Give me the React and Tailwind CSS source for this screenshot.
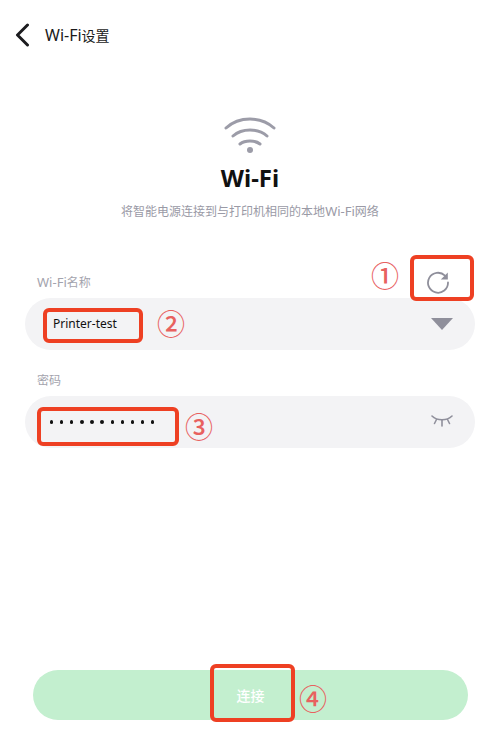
import React from 'react';

const fontStack = "font-['Noto_Sans','Noto_Sans_CJK_SC',sans-serif]";

function WifiIcon() {
  return (
    <svg width="52" height="38" viewBox="0 0 52 38" fill="none" stroke="#9c9ca8" strokeWidth="3" strokeLinecap="round">
      <path d="M2 12 C15 0 37 0 50 12" />
      <path d="M9 20 C18 12 34 12 43 20" />
      <path d="M16 28 C21 24 31 24 36 28" />
      <circle cx="26" cy="34" r="3" fill="#9c9ca8" stroke="none" />
    </svg>
  );
}

function RefreshIcon() {
  return (
    <svg width="24" height="24" viewBox="0 0 24 24" fill="none">
      <path d="M19 5.6 A10 10 0 1 0 22 12.5" stroke="#8f8f9b" strokeWidth="1.8" strokeLinecap="round" />
      <path d="M21.8 2.5 V9.6 H14.8 Z" fill="#8f8f9b" />
    </svg>
  );
}

function EyeClosedIcon() {
  return (
    <svg className="mb-[2px]" width="22" height="12" viewBox="0 0 22 12" fill="none" stroke="#8f8f9b" strokeWidth="1.6" strokeLinecap="round">
      <path d="M1 1 C6 6 16 6 21 1" />
      <path d="M5.5 4.5 L3.5 8.5" />
      <path d="M11 5.5 V11" />
      <path d="M16.5 4.5 L18.5 8.5" />
    </svg>
  );
}

function Marker({ className }) {
  return <div className={`absolute border-4 border-[#ee4023] rounded-md ${className}`} />;
}

function Num({ className, children }) {
  return (
    <span className={`absolute w-[28px] h-[28px] flex items-center justify-center text-[#e8615f] text-[28px] leading-none font-medium font-['Noto_Sans_CJK_SC',sans-serif] ${className}`}>
      {children}
    </span>
  );
}

export default function App() {
  return (
    <div className={`relative w-[500px] h-[750px] bg-white overflow-hidden flex flex-col ${fontStack}`}>
      <div className="h-[70px] flex items-center pl-[15px] shrink-0">
        <svg width="15" height="24" viewBox="0 0 15 24" fill="none" stroke="#1c1c1f" strokeWidth="3" strokeLinecap="round" strokeLinejoin="round">
          <path d="M12.5 2 L2.5 12 L12.5 22" />
        </svg>
        <span className="ml-[15px] text-[14px] leading-[20px] text-[#1a1a1a]">
          <span className="text-[16px]">Wi-Fi</span>设置
        </span>
      </div>

      <div className="flex flex-col items-center pt-[46px]">
        <WifiIcon />
        <h1 className="mt-[8px] text-[24px] leading-[32px] font-bold text-[#111]">Wi-Fi</h1>
        <p className="mt-[8px] text-[12px] leading-[18px] text-[#9a9aa6]">
          将智能电源连接到与打印机相同的本地<span className="text-[13px]">Wi-Fi</span>网络
        </p>
      </div>

      <div className="px-[25px] mt-[52px]">
        <label className="block pl-[12px] text-[12px] leading-[18px] text-[#a3a3ad]">
          <span className="text-[13px]">Wi-Fi</span>名称
        </label>
        <div className="mt-[6px] h-[52px] rounded-full bg-[#f3f3f5] flex items-center justify-between pl-[28px] pr-[22px]">
          <span className="text-[12px] text-[#111]">Printer-test</span>
          <svg width="22" height="12" viewBox="0 0 22 12">
            <path d="M0 0 H22 L11 12 Z" fill="#8f8f9b" />
          </svg>
        </div>

        <label className="block mt-[22px] pl-[12px] text-[12px] leading-[18px] text-[#a3a3ad]">密码</label>
        <div className="mt-[6px] h-[52px] rounded-full bg-[#f3f3f5] flex items-center justify-between pl-[25px] pr-[22px]">
          <div className="flex gap-[6.8px]">
            {Array.from({ length: 11 }).map((_, i) => (
              <span key={i} className="w-[3.3px] h-[3.3px] rounded-full bg-[#111]" />
            ))}
          </div>
          <EyeClosedIcon />
        </div>
      </div>

      <div className="mt-auto mb-[30px] ml-[33px] mr-[32px] h-[50px] rounded-full bg-[#c3efcf] flex items-center justify-center">
        <span className="text-[14px] font-medium text-white">连接</span>
      </div>

      {/* refresh button sits over the field label row */}
      <div className="absolute left-[426px] top-[270px]">
        <RefreshIcon />
      </div>

      <Marker className="left-[410px] top-[255px] w-[64px] h-[46px]" />
      <Marker className="left-[43px] top-[308px] w-[100px] h-[35px]" />
      <Marker className="left-[37px] top-[407px] w-[142px] h-[39px]" />
      <Marker className="left-[210px] top-[664px] w-[85px] h-[58px]" />

      <Num className="left-[371px] top-[261px]">①</Num>
      <Num className="left-[157px] top-[309px]">②</Num>
      <Num className="left-[185px] top-[412px]">③</Num>
      <Num className="left-[299px] top-[684px]">④</Num>
    </div>
  );
}
